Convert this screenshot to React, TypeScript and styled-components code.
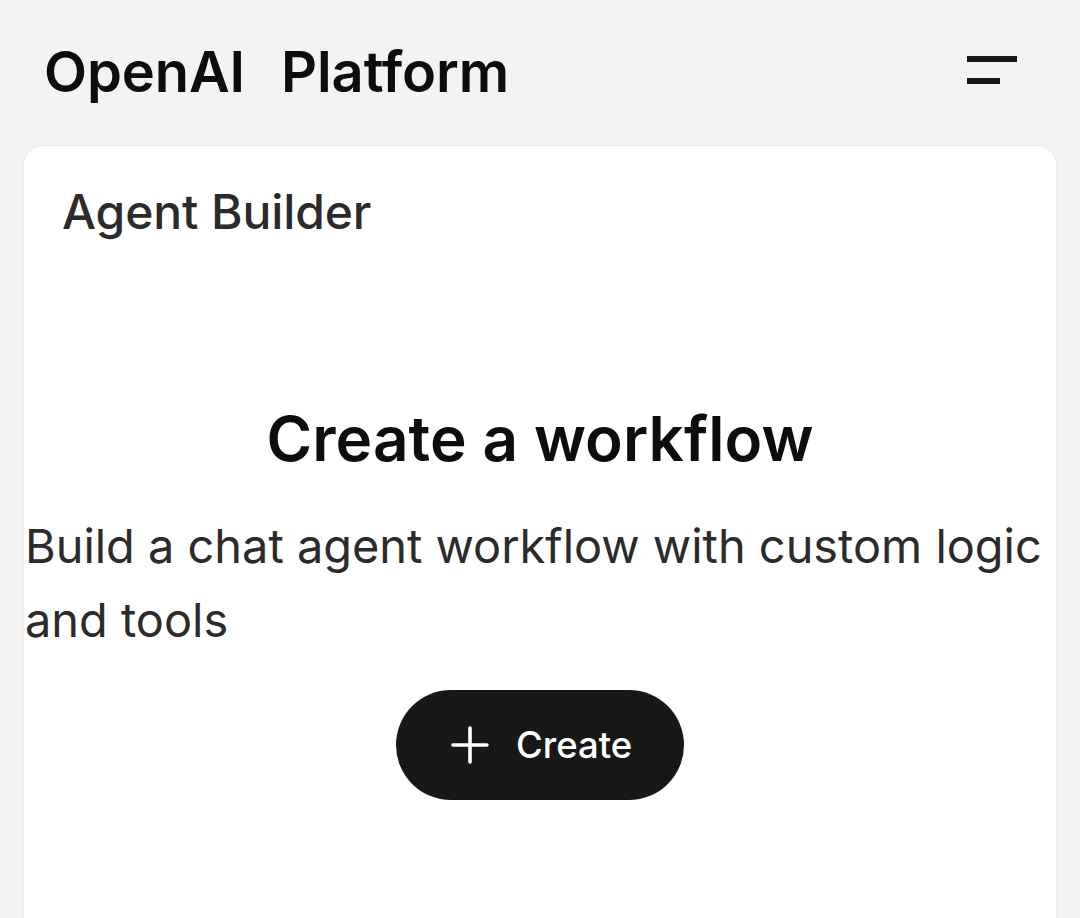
import React from "react";
import styled, { createGlobalStyle } from "styled-components";
import { Plus } from "lucide-react";

const Global = createGlobalStyle`
  html, body {
    margin: 0;
    padding: 0;
    height: 918px;
    overflow: hidden;
    background: #f3f3f3;
    font-family: Inter, "Liberation Sans", sans-serif;
  }
`;

const Page = styled.div`
  width: 1080px;
  height: 918px;
  overflow: hidden;
  display: flex;
  flex-direction: column;
`;

const TopBar = styled.header`
  height: 145px;
  box-sizing: border-box;
  flex: none;
  display: flex;
  align-items: center;
  justify-content: space-between;
  padding: 0 63px 5px 44px;
`;

const Brand = styled.div`
  display: flex;
  gap: 36px;
  padding-top: 4px;
  font-size: 56px;
  font-weight: 600;
  letter-spacing: -0.1px;
  color: #0d0d0d;
`;

const MenuIcon = styled.div`
  display: flex;
  flex-direction: column;
  gap: 16px;
  width: 50px;
`;

const MenuLine = styled.span<{ $w: number }>`
  display: block;
  height: 6px;
  width: ${(p) => p.$w}px;
  background: #181818;
`;

const Card = styled.main`
  flex: 1;
  margin: 0 23px;
  background: #fff;
  border: 1px solid #ececec;
  border-bottom: none;
  border-radius: 20px 20px 0 0;
  display: flex;
  flex-direction: column;
`;

const Title = styled.h2`
  margin: 38px 0 0 38px;
  font-size: 48px;
  line-height: 56px;
  font-weight: 500;
  letter-spacing: -0.1px;
  color: #2b2b2b;
`;

const Heading = styled.h1`
  margin: 161px 0 0;
  text-align: center;
  font-size: 62px;
  line-height: 76px;
  font-weight: 600;
  letter-spacing: 0.1px;
  color: #0d0d0d;
`;

const Sub = styled.p`
  margin: 32px 0 0 1px;
  font-size: 46.9px;
  line-height: 74px;
  color: #2b2b2b;
`;

const CreateButton = styled.button`
  align-self: center;
  margin-top: 33px;
  width: 288px;
  height: 110px;
  box-sizing: border-box;
  padding: 0 0 0 45px;
  border: none;
  border-radius: 55px;
  background: #181818;
  color: #fff;
  display: flex;
  align-items: center;
  justify-content: flex-start;
  gap: 17px;
  font: 500 36.5px Inter, "Liberation Sans", sans-serif;
`;

export default function App() {
  return (
    <>
      <Global />
      <Page>
        <TopBar>
          <Brand>
            <span>OpenAI</span>
            <span>Platform</span>
          </Brand>
          <MenuIcon>
            <MenuLine $w={50} />
            <MenuLine $w={33} />
          </MenuIcon>
        </TopBar>
        <Card>
          <Title>Agent Builder</Title>
          <Heading>Create a workflow</Heading>
          <Sub>Build a chat agent workflow with custom logic and tools</Sub>
          <CreateButton>
            <Plus size={58} strokeWidth={1.5} />
            Create
          </CreateButton>
        </Card>
      </Page>
    </>
  );
}
